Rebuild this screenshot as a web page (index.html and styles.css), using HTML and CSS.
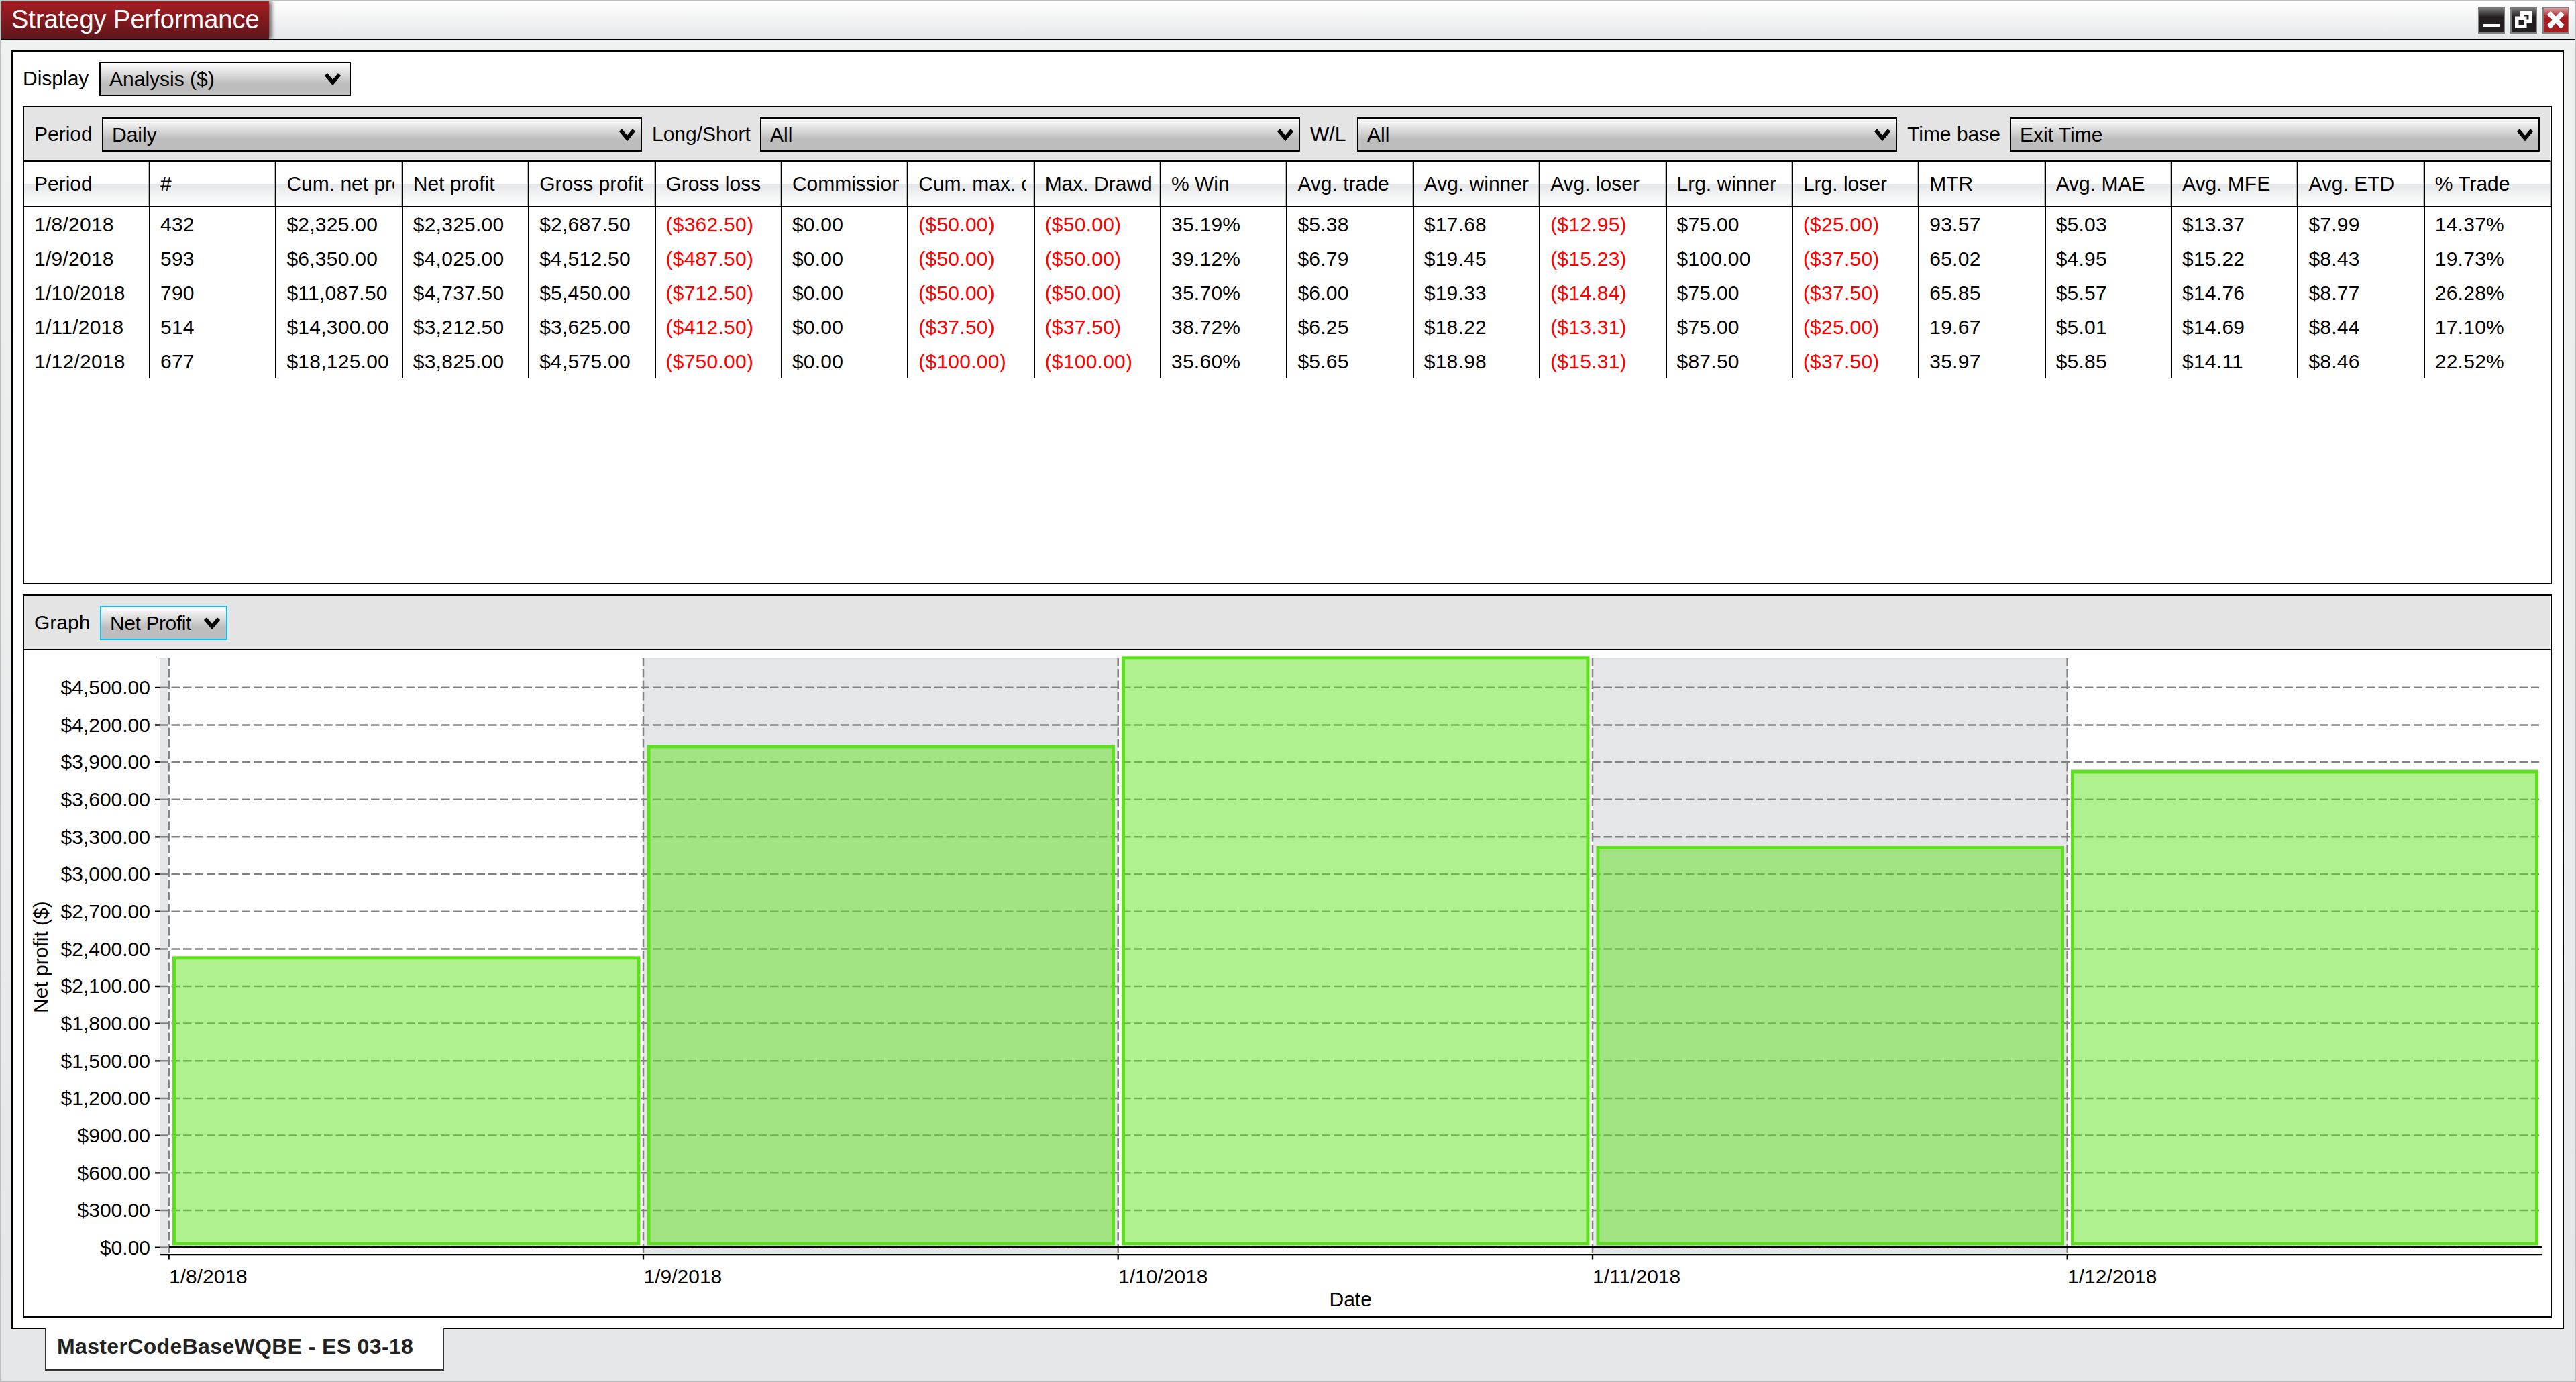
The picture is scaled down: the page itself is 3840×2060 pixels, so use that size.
FILE: index.html
```html
<!DOCTYPE html>
<html lang="en">
<head>
<meta charset="utf-8">
<title>Strategy Performance</title>
<link rel="stylesheet" href="styles.css">
</head>
<body>
<div class="window">
  <header class="titlebar">
    <div class="title">Strategy Performance</div>
    <div class="buttons">
      <div class="btn"><svg viewBox="0 0 36 36"><path d="M5 24h25v4H5z" fill="#fff"/></svg></div>
      <div class="btn"><svg viewBox="0 0 36 36"><path d="M13 5h17.500v17.500H13z" fill="#fff"/><path d="M18.500 10.500h7v7h-7z" fill="#231f20"/><path d="M5 12.500h17.500v17.500H5z" fill="#fff"/><path d="M10.500 18h7.500v7H10.500z" fill="#231f20"/></svg></div>
      <div class="btn close"><svg viewBox="0 0 36 36"><path d="M7.500 7.500L28 28M28 7.500L7.500 28" stroke="#fff" stroke-width="7.500"/></svg></div>
    </div>
  </header>
  <main class="panel">
    <div class="display-row">
      <span class="label display-label">Display</span>
      <div class="select display-select">Analysis ($)<svg class="chev" viewBox="0 0 24 18"><path d="M2 2L12 14L22 2" fill="none" stroke="#000" stroke-width="5.500"/></svg></div>
    </div>
    <section class="box table-box">
      <div class="toolbar filters">
        <span class="label">Period</span>
        <div class="select">Daily<svg class="chev" viewBox="0 0 24 18"><path d="M2 2L12 14L22 2" fill="none" stroke="#000" stroke-width="5.500"/></svg></div>
        <span class="label">Long/Short</span>
        <div class="select">All<svg class="chev" viewBox="0 0 24 18"><path d="M2 2L12 14L22 2" fill="none" stroke="#000" stroke-width="5.500"/></svg></div>
        <span class="label">W/L</span>
        <div class="select">All<svg class="chev" viewBox="0 0 24 18"><path d="M2 2L12 14L22 2" fill="none" stroke="#000" stroke-width="5.500"/></svg></div>
        <span class="label">Time base</span>
        <div class="select">Exit Time<svg class="chev" viewBox="0 0 24 18"><path d="M2 2L12 14L22 2" fill="none" stroke="#000" stroke-width="5.500"/></svg></div>
      </div>
      <div class="row head">
        <div><span>Period</span></div><div><span>#</span></div><div><span>Cum. net profit</span></div><div><span>Net profit</span></div><div><span>Gross profit</span></div><div><span>Gross loss</span></div><div><span>Commission</span></div><div><span>Cum. max. drawdown</span></div><div><span>Max. Drawdown</span></div><div><span>% Win</span></div><div><span>Avg. trade</span></div><div><span>Avg. winner</span></div><div><span>Avg. loser</span></div><div><span>Lrg. winner</span></div><div><span>Lrg. loser</span></div><div><span>MTR</span></div><div><span>Avg. MAE</span></div><div><span>Avg. MFE</span></div><div><span>Avg. ETD</span></div><div><span>% Trade</span></div>
      </div>
      <div class="row">
        <div>1/8/2018</div><div>432</div><div>$2,325.00</div><div>$2,325.00</div><div>$2,687.50</div><div class="neg">($362.50)</div><div>$0.00</div><div class="neg">($50.00)</div><div class="neg">($50.00)</div><div>35.19%</div><div>$5.38</div><div>$17.68</div><div class="neg">($12.95)</div><div>$75.00</div><div class="neg">($25.00)</div><div>93.57</div><div>$5.03</div><div>$13.37</div><div>$7.99</div><div>14.37%</div>
      </div>
      <div class="row">
        <div>1/9/2018</div><div>593</div><div>$6,350.00</div><div>$4,025.00</div><div>$4,512.50</div><div class="neg">($487.50)</div><div>$0.00</div><div class="neg">($50.00)</div><div class="neg">($50.00)</div><div>39.12%</div><div>$6.79</div><div>$19.45</div><div class="neg">($15.23)</div><div>$100.00</div><div class="neg">($37.50)</div><div>65.02</div><div>$4.95</div><div>$15.22</div><div>$8.43</div><div>19.73%</div>
      </div>
      <div class="row">
        <div>1/10/2018</div><div>790</div><div>$11,087.50</div><div>$4,737.50</div><div>$5,450.00</div><div class="neg">($712.50)</div><div>$0.00</div><div class="neg">($50.00)</div><div class="neg">($50.00)</div><div>35.70%</div><div>$6.00</div><div>$19.33</div><div class="neg">($14.84)</div><div>$75.00</div><div class="neg">($37.50)</div><div>65.85</div><div>$5.57</div><div>$14.76</div><div>$8.77</div><div>26.28%</div>
      </div>
      <div class="row">
        <div>1/11/2018</div><div>514</div><div>$14,300.00</div><div>$3,212.50</div><div>$3,625.00</div><div class="neg">($412.50)</div><div>$0.00</div><div class="neg">($37.50)</div><div class="neg">($37.50)</div><div>38.72%</div><div>$6.25</div><div>$18.22</div><div class="neg">($13.31)</div><div>$75.00</div><div class="neg">($25.00)</div><div>19.67</div><div>$5.01</div><div>$14.69</div><div>$8.44</div><div>17.10%</div>
      </div>
      <div class="row">
        <div>1/12/2018</div><div>677</div><div>$18,125.00</div><div>$3,825.00</div><div>$4,575.00</div><div class="neg">($750.00)</div><div>$0.00</div><div class="neg">($100.00)</div><div class="neg">($100.00)</div><div>35.60%</div><div>$5.65</div><div>$18.98</div><div class="neg">($15.31)</div><div>$87.50</div><div class="neg">($37.50)</div><div>35.97</div><div>$5.85</div><div>$14.11</div><div>$8.46</div><div>22.52%</div>
      </div>
    </section>
    <section class="box graph-box">
      <div class="toolbar graph-bar">
        <span class="label">Graph</span>
        <div class="select focus">Net Profit<svg class="chev" viewBox="0 0 24 18"><path d="M2 2L12 14L22 2" fill="none" stroke="#000" stroke-width="5.500"/></svg></div>
      </div>
      <svg class="chart" viewBox="36 969 3766 993">
        <g fill="#e5e6e8">
          <rect x="239" y="981" width="12" height="888"/>
          <rect x="959" y="981" width="708" height="888"/>
          <rect x="2374" y="981" width="708" height="888"/>
        </g>
        <path class="grid" d="M238 1024.800H3785M238 1080.500H3785M238 1136H3785M238 1191.800H3785M238 1247.300H3785M238 1303H3785M238 1358.700H3785M238 1414.400H3785M238 1470H3785M238 1525.600H3785M238 1581.300H3785M238 1637H3785M238 1692.600H3785M238 1748.300H3785M238 1803.900H3785M238 1859.600H3785"/>
        <path class="grid vert" d="M251.700 981V1868M959 981V1868M1666.700 981V1868M2374 981V1868M3081.700 981V1868"/>
        <g class="bars">
          <rect x="259.500" y="1427.800" width="692.500" height="426.200"/>
          <rect x="967" y="1112.800" width="692.500" height="741.200"/>
          <rect x="1674.500" y="980.800" width="692.500" height="873.200"/>
          <rect x="2382" y="1263.500" width="692.500" height="590.500"/>
          <rect x="3089.500" y="1150" width="692" height="704"/>
        </g>
        <path fill="#000" d="M252 1858H3789V1860H252zM238 1869H3789V1871.300H238z"/>
        <path fill="#333" d="M238 981h1v890h-1z"/>
        <path class="ticks" d="M231 1024.800h7M231 1080.500h7M231 1136h7M231 1191.800h7M231 1247.300h7M231 1303h7M231 1358.700h7M231 1414.400h7M231 1470h7M231 1525.600h7M231 1581.300h7M231 1637h7M231 1692.600h7M231 1748.300h7M231 1803.900h7M231 1859.600h7M251.700 1871v6.500M959 1871v6.500M1666.700 1871v6.500M2374 1871v6.500M3081.700 1871v6.500"/>
        <g class="ylabels">
          <text x="224" y="1035">$4,500.00</text><text x="224" y="1091">$4,200.00</text><text x="224" y="1146">$3,900.00</text><text x="224" y="1202">$3,600.00</text><text x="224" y="1258">$3,300.00</text><text x="224" y="1313">$3,000.00</text><text x="224" y="1369">$2,700.00</text><text x="224" y="1425">$2,400.00</text><text x="224" y="1480">$2,100.00</text><text x="224" y="1536">$1,800.00</text><text x="224" y="1592">$1,500.00</text><text x="224" y="1647">$1,200.00</text><text x="224" y="1703">$900.00</text><text x="224" y="1759">$600.00</text><text x="224" y="1814">$300.00</text><text x="224" y="1870">$0.00</text>
        </g>
        <text x="252" y="1913">1/8/2018</text><text x="959.500" y="1913">1/9/2018</text><text x="1667" y="1913">1/10/2018</text><text x="2374" y="1913">1/11/2018</text><text x="3082" y="1913">1/12/2018</text>
        <text x="1981.500" y="1947">Date</text>
        <text transform="translate(71 1510) rotate(-90)">Net profit ($)</text>
      </svg>
    </section>
  </main>
  <footer class="tabs"><div class="tab">MasterCodeBaseWQBE - ES 03-18</div></footer>
</div>
</body>
</html>
```
FILE: styles.css
```css
* { box-sizing: border-box; }
body {
  margin: 0;
  font-family: "Liberation Sans", Arial, sans-serif;
  font-size: 30px;
  color: #000;
}
.window {
  width: 3840px;
  height: 2060px;
  border: 2px solid #bfbfbf;
  background: linear-gradient(#f0f2f1, #e5e6e8);
  display: flex;
  flex-direction: column;
}
.titlebar {
  height: 58px;
  flex: none;
  border-bottom: 2px solid #000;
  background: linear-gradient(#fff, #e6e7e9);
  display: flex;
  justify-content: space-between;
}
.title {
  width: 399px;
  padding-left: 15px;
  font-size: 38px;
  line-height: 54px;
  white-space: nowrap;
  color: #fff;
  background: linear-gradient(#a61e22, #5c161b);
  box-shadow: 4px 0 6px rgba(0, 0, 0, .6);
  clip-path: inset(0 -14px 0 0);
}
.buttons {
  display: flex;
  gap: 8px;
  padding: 8px 8px 0 0;
}
.btn {
  width: 40px;
  height: 40px;
  border: 2px solid #808080;
  background: linear-gradient(#777 0%, #231f20 38%);
}
.btn svg { display: block; }
.close { background: linear-gradient(#d8a0a2 0%, #a61e22 38%); }
.panel {
  margin: 15px 16px 0 15px;
  height: 1906px;
  flex: none;
  border: 2px solid #000;
  background: #fff;
  padding: 15px 16px 0 15px;
  display: flex;
  flex-direction: column;
}
.display-row {
  height: 51px;
  flex: none;
  display: flex;
}
.label {
  line-height: 49px;
  white-space: nowrap;
}
.display-label {
  width: 114px;
  padding-left: 0;
}
.select {
  height: 51px;
  border: 2px solid #000;
  background: linear-gradient(#fff, #bdbdbd 65%);
  padding: 0 8px 0 13px;
  line-height: 47px;
  display: flex;
  justify-content: space-between;
  white-space: nowrap;
}
.chev {
  width: 24px;
  height: 18px;
  margin-top: 15px;
  flex: none;
}
.display-select {
  width: 375px;
  padding-right: 13px;
}
.box {
  border: 2px solid #000;
  background: #fff;
}
.table-box {
  margin-top: 15px;
  height: 713px;
  flex: none;
}
.toolbar {
  height: 81px;
  background: #e4e4e4;
  border-bottom: 2px solid #000;
  border-right: 1px solid #fff;
}
.filters {
  padding: 15px 15px 0 14px;
  display: grid;
  grid-template-columns: 102px 805px 176px 805px 85px 805px 168px 790px;
}
.filters .label { padding-left: 15px; }
.filters .label:first-child { padding-left: 1px; }
.row {
  display: grid;
  grid-template-columns: 188px repeat(18, 188.39px) 1fr;
  height: 51px;
  line-height: 51px;
  letter-spacing: .25px;
}
.row > div {
  padding: 0 12px 0 15px;
  border-right: 2px solid #000;
  white-space: nowrap;
  overflow: hidden;
}
.row > div:last-child { border-right: 0; }
.row .neg { color: #f00; }
.head {
  height: 68px;
  line-height: 66px;
  letter-spacing: 0;
  border-bottom: 2px solid #000;
  background: linear-gradient(#fff 50%, #e5e7e9 50%, #fff 100%);
}
.head > div { box-shadow: inset -1px 0 #bbb; }
.head span {
  display: block;
  overflow: hidden;
}
.graph-box {
  margin-top: 15px;
  height: 1078px;
  flex: none;
}
.graph-bar {
  padding: 15px 0 0 15px;
  display: flex;
}
.graph-bar .label { width: 98px; }
.focus {
  width: 190px;
  border-color: #10bfee;
  padding: 0 9px 0 13px;
  letter-spacing: -.4px;
}
.chart {
  display: block;
  width: 3766px;
  height: 993px;
}
.grid {
  fill: none;
  stroke: #828282;
  stroke-width: 2.5;
  stroke-dasharray: 12.5 5;
}
.vert { stroke-dashoffset: 1.5; }
.bars rect {
  fill: rgba(96, 225, 32, .5);
  stroke: #5ee11d;
  stroke-width: 5;
}
.ticks {
  fill: none;
  stroke: #000;
  stroke-width: 2.3;
}
.ylabels { text-anchor: end; }
.tabs { padding-left: 65px; }
.tab {
  width: 595px;
  height: 64px;
  margin-top: -2px;
  position: relative;
  border: 2px solid #333;
  border-top: 0;
  background: #fff;
  padding-left: 16px;
  font-size: 32px;
  letter-spacing: .35px;
  font-weight: bold;
  line-height: 57px;
  color: #222;
  white-space: nowrap;
}
```
